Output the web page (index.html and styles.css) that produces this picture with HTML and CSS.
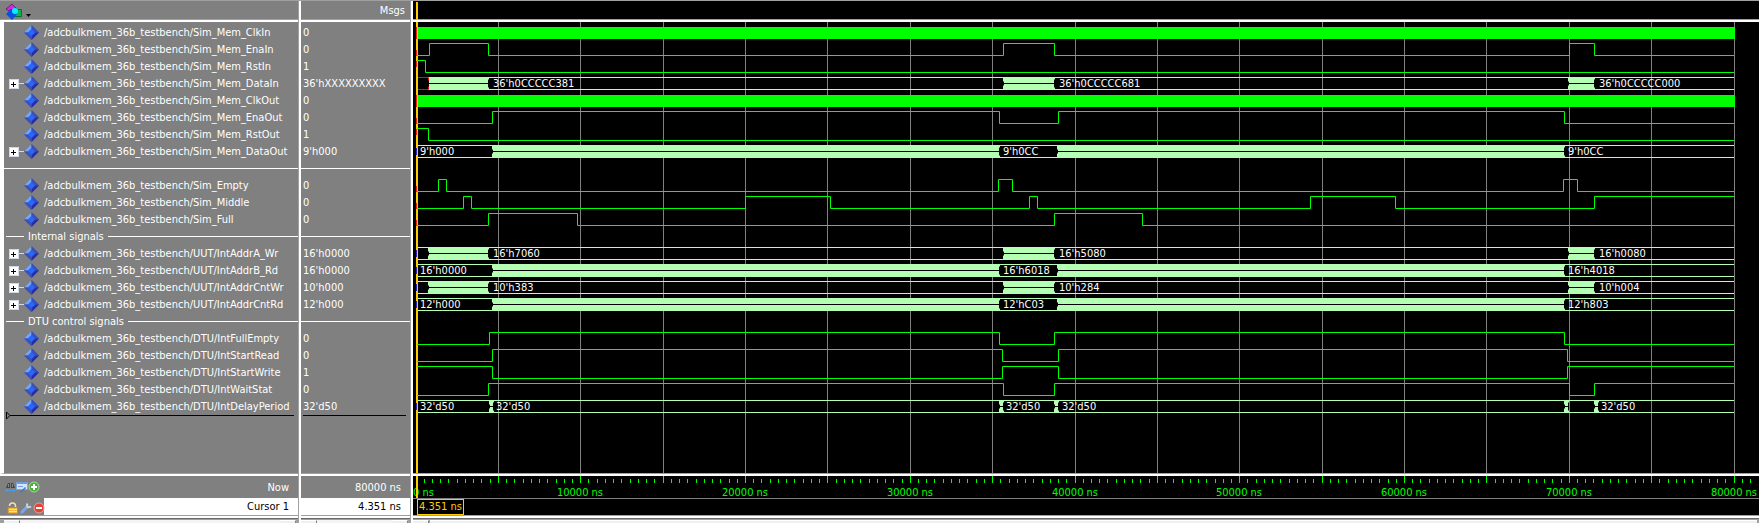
FILE: index.html
```html
<!DOCTYPE html>
<html lang="en">
<head>
<meta charset="utf-8">
<title>Wave</title>
<link rel="stylesheet" href="styles.css">
</head>
<body>
<svg class="defs" aria-hidden="true">
  <symbol id="signal" viewBox="0 0 15 15">
    <path fill="#3c5cc8" d="M7.5 0 15 7.5 7.5 15 0 7.5z"/>
    <path fill="#7ba6ee" d="M7.5 0v4L4 7.5H0z"/>
    <path fill="#3a50b4" d="M7.5 0v4L11 7.5h4z"/>
    <path fill="#2c2ca0" d="M15 7.5h-4L7.5 11v4z"/>
    <path fill="#3e50b8" d="M0 7.5h4L7.5 11v4z"/>
    <path fill="#2468ff" d="M7.5 4 11 7.5 7.5 11 4 7.5z"/>
  </symbol>
</svg>
<main class="wave-window">
  <section class="pane names" aria-label="Signals">
    <header class="bar head">
      <button class="tool" type="button" aria-label="Object type">
        <svg width="26" height="18" viewBox="0 0 26 18">
          <path fill="#d028e0" stroke="#500060" stroke-width=".6" d="M0 7 6 2l5 5-3 3-3-3-2 2z"/>
          <path fill="#10b050" stroke="#087030" d="M8.500 7.500h7v7h-7z"/>
          <path fill="#0a50e0" d="M5 7l6 5-5 6-6-6z"/>
          <circle cx="9" cy="9" r="3" fill="#00f0ff"/>
          <path fill="#000" d="M20 12h5l-2.500 3z"/>
        </svg>
      </button>
    </header>
    <ul class="rows gutter" id="names"></ul>
    <footer class="foot">
      <div class="foot-row now">
        <button class="tool" type="button" aria-label="Find edges"><svg width="11" height="12" viewBox="0 0 11 12"><path fill="#444" d="M1 7 3 2h2v5zM6 7V2h2l2 5z"/><path fill="#8a8a8a" d="M3 3h1v3H3zM7 3h1v3H7z"/><path stroke="#4d9be8" fill="none" d="M0 9.500h10M2 8v3M9 8v3"/></svg></button>
        <button class="tool" type="button" aria-label="Edit grid"><svg width="12" height="12" viewBox="0 0 12 12"><path fill="#d6e6fa" stroke="#7fa6dc" d="M.5 1.500h11v7H.5z"/><path fill="#6f9be0" d="M1 1h10v2H1zM2 5h5v1H2z"/><path fill="#3b78d0" d="m4 11 5-5 1 1-5 5z"/></svg></button>
        <button class="tool" type="button" aria-label="Add cursor"><svg width="12" height="12" viewBox="0 0 12 12"><circle cx="6" cy="6" r="5" fill="#4caf3c" stroke="#a4dc98"/><path stroke="#fff" stroke-width="2" d="M6 3v6M3 6h6"/></svg></button>
        <span class="foot-label">Now</span>
      </div>
      <div class="foot-row cursor">
        <span class="foot-tools">
          <button class="tool" type="button" aria-label="Lock cursor"><svg width="12" height="12" viewBox="0 0 12 12"><path fill="none" stroke="#f3dfa6" stroke-width="1.500" d="M2.500 4c0-4 6-4 6 0v2"/><path fill="#f4b73c" stroke="#c98a1c" d="M1 5.500h9.500v6H1z"/><path stroke="#fbe2a0" d="M2 7.500h8M2 9.500h8"/></svg></button>
          <button class="tool" type="button" aria-label="Edit cursor"><svg width="12" height="12" viewBox="0 0 12 12"><path stroke="#7aa7ee" stroke-width="3" stroke-linecap="round" d="m2 10 5-5"/><path fill="none" stroke="#c9d3e0" stroke-width="2" d="M7.500 1.500C6 5 8 6 11 4.500"/></svg></button>
          <button class="tool" type="button" aria-label="Delete cursor"><svg width="12" height="12" viewBox="0 0 12 12"><circle cx="6" cy="6" r="5" fill="#e04434" stroke="#f0a098"/><path stroke="#fff" stroke-width="2" d="M3 6h6"/></svg></button>
        </span>
        <span class="foot-label">Cursor 1</span>
      </div>
    </footer>
    <div class="scroll"><i class="cap"></i><i class="track"></i><i class="cap"></i></div>
  </section>
  <section class="pane values" aria-label="Values">
    <header class="bar head"><span class="msgs">Msgs</span></header>
    <ul class="rows" id="values"></ul>
    <footer class="foot">
      <div class="foot-row now"><span class="foot-label">80000 ns</span></div>
      <div class="foot-row cursor"><span class="foot-label">4.351 ns</span></div>
    </footer>
    <div class="scroll"><i class="cap"></i><i class="track"></i><i class="cap"></i></div>
  </section>
  <section class="pane waves" aria-label="Waveforms">
    <header class="bar head"><i class="cursor-line"></i></header>
    <div class="plot"><svg id="plot" role="img" aria-label="Signal waveforms"></svg></div>
    <footer class="foot">
      <div class="foot-row scale"><svg id="scale" role="img" aria-label="Time scale"></svg></div>
      <div class="foot-row marker"><span class="stamp">4.351 ns</span></div>
    </footer>
    <div class="scroll"><i class="cap"></i><i class="thumb"></i></div>
  </section>
</main>
<script src="wave.js"></script>
</body>
</html>
```
FILE: styles.css
```css
* { box-sizing: border-box; }

body {
  margin: 0;
  background: #808080;
  color: #fff;
  font: 11px/17px "DejaVu Sans Condensed", "DejaVu Sans", sans-serif;
  overflow: hidden;
}

ul { list-style: none; margin: 0; padding: 0; }
svg { display: block; }
.defs { position: absolute; width: 0; height: 0; }

.wave-window {
  display: grid;
  grid-template-columns: 301px 112px minmax(0, 1fr);
  height: 100vh;
  border-top: 1px solid #a0a0a0;
}

.pane {
  display: flex;
  flex-direction: column;
  min-width: 0;
  min-height: 0;
}

.names, .values {
  padding-right: 1px;
  border-right: 2px solid #fff;
  box-shadow: inset -1px 0 #a0a0a0;
}

.bar {
  display: flex;
  align-items: center;
  height: 21px;
  flex: none;
  border-bottom: 2px solid #fff;
  box-shadow: inset 0 -1px #a0a0a0;
}

.names .bar { padding-left: 6px; }
.values .bar { justify-content: flex-end; padding-right: 5px; }

.tool {
  display: block;
  flex: none;
  margin: 0;
  padding: 0;
  border: 0;
  background: none;
}

.rows, .plot {
  flex: 1;
  min-height: 0;
  overflow: hidden;
  border-bottom: 1px solid #a0a0a0;
}

.rows { padding-top: 2px; }
.gutter { border-left: 4px solid #fff; }

.row {
  display: flex;
  align-items: center;
  height: 17px;
  white-space: nowrap;
}

.names .row { padding-left: 5px; }
.values .row { padding-left: 2px; }

.expander { display: flex; align-items: center; width: 15px; height: 17px; }
.plus { flex: none; padding: 0; border: 0; background: none; }
.stub { flex: 1; height: 1px; background: #d8d8d8; }
.glyph { width: 15px; height: 15px; margin-right: 5px; }

.divider { gap: 4px; }
.names .divider { padding-left: 2px; }
.values .divider, .names .divider.plain { padding-left: 0; }
.divider::after { content: ""; flex: 1; height: 1px; background: #fff; }
.divider.titled::before { content: ""; width: 18px; height: 1px; background: #fff; }

.insert {
  display: flex;
  align-items: center;
  height: 1px;
  margin: 0 4px 0 2px;
  background: #000;
}

.insert svg { overflow: visible; }

.foot {
  flex: none;
  border-top: 2px solid #fff;
  border-bottom: 2px solid #fff;
}

.foot-row { display: flex; align-items: center; }
.now { height: 22px; padding: 0 9px 0 5px; }
.cursor { height: 18px; padding-right: 9px; background: #fff; color: #000; border-bottom: 1px solid #a0a0a0; }
.foot-label { margin-left: auto; }
.foot-tools { display: flex; gap: 1px; width: 44px; height: 17px; padding: 3px 0 0 7px; background: #808080; }

.scroll {
  display: flex;
  flex: none;
  height: 5px;
  padding: 1px 2px 0 4px;
  border-top: 1px solid #696969;
  background: #a0a0a0;
}

.values .scroll, .waves .scroll { padding-left: 0; }
.cap { width: 16px; background: #f0f0f0; border-top: 1px solid #fff; border-right: 1px solid #808080; }
.track { flex: 1; background: #f4f4f4; }
.thumb { flex: 1; margin-left: 1px; background: #f0f0f0; border-top: 1px solid #fff; }

.waves { background: #000; }
.waves .bar { padding-left: 3px; }
.cursor-line { width: 2px; height: 18px; background: #ffcc00; }
.plot { padding-left: 3px; }
.plot svg, .scale svg { width: 100%; height: 100%; }
.scale { height: 23px; padding-left: 3px; border-bottom: 1px solid #808080; }
.scale svg { overflow: visible; }

.marker { height: 17px; padding-left: 4px; border-bottom: 1px solid #a0a0a0; }
.stamp { height: 16px; padding: 0 1px; line-height: 14px; border: 1px solid #ffcc00; color: #ffcc00; }

.plot text { fill: #fff; }
.scale text { fill: #0f0; text-anchor: middle; }
.scale .origin { text-anchor: start; }
.grid { stroke: #808080; }
.level, .ticks { stroke: #0f0; fill: none; }
.rail { stroke: #b4ffb4; fill: none; }
.busy { fill: #b4ffb4; }
.clock { fill: #0f0; }
.mid { stroke: #000; }
.unknown { stroke: #f00; fill: none; }
.caret { fill: #ffcc00; }
.red { fill: #ff2000; }
.blue { fill: #3020c0; }
```
FILE: wave.js
```js
const T = "/adcbulkmem_36b_testbench/";
const END = 1318;
const busA = [[13, 72], [588, 638], [1153, 1178]];
const busB = [[77, 583], [642, 1148]];

// level: [initial value, toggle positions]; bus: busy spans and labels
const rows = [
  { name: "Sim_Mem_ClkIn", value: "0", clock: true },
  { name: "Sim_Mem_EnaIn", value: "0", level: [0, 13, 72, 587, 638, 1153, 1178] },
  { name: "Sim_Mem_RstIn", value: "1", level: [1, 9] },
  { name: "Sim_Mem_DataIn", value: "36'hXXXXXXXXX", bus: busA, unknown: 12, text: [[77, "36'h0CCCCC381"], [643, "36'h0CCCCC681"], [1183, "36'h0CCCCC000"]] },
  { name: "Sim_Mem_ClkOut", value: "0", clock: true },
  { name: "Sim_Mem_EnaOut", value: "0", level: [0, 76, 583, 642, 1148] },
  { name: "Sim_Mem_RstOut", value: "1", level: [1, 12] },
  { name: "Sim_Mem_DataOut", value: "9'h000", bus: busB, text: [[4, "9'h000"], [587, "9'h0CC"], [1152, "9'h0CC"]] },
  { divider: "" },
  { name: "Sim_Empty", value: "0", level: [0, 22, 30, 582, 596, 1147, 1161] },
  { name: "Sim_Middle", value: "0", level: [0, 47, 55, 329, 414, 613, 621, 894, 979, 1178] },
  { name: "Sim_Full", value: "0", level: [0, 72, 161, 638, 726] },
  { divider: "Internal signals" },
  { name: "UUT/IntAddrA_Wr", value: "16'h0000", bus: busA, text: [[77, "16'h7060"], [643, "16'h5080"], [1183, "16'h0080"]] },
  { name: "UUT/IntAddrB_Rd", value: "16'h0000", bus: busB, text: [[4, "16'h0000"], [587, "16'h6018"], [1152, "16'h4018"]] },
  { name: "UUT/IntAddrCntWr", value: "10'h000", bus: busA, text: [[77, "10'h383"], [643, "10'h284"], [1183, "10'h004"]] },
  { name: "UUT/IntAddrCntRd", value: "12'h000", bus: busB, text: [[4, "12'h000"], [587, "12'hC03"], [1152, "12'h803"]] },
  { divider: "DTU control signals" },
  { name: "DTU/IntFullEmpty", value: "0", late: true, level: [0, 73, 583, 638, 1148] },
  { name: "DTU/IntStartRead", value: "0", late: true, level: [0, 76, 586, 642, 1151] },
  { name: "DTU/IntStartWrite", value: "1", late: true, level: [1, 76, 586, 642, 1151] },
  { name: "DTU/IntWaitStat", value: "0", late: true, level: [0, 72, 587, 638, 1153, 1178] },
  { name: "DTU/IntDelayPeriod", value: "32'd50", leaf: true, bus: [[74, 77], [584, 587], [639, 642], [1149, 1152], [1179, 1182]], text: [[4, "32'd50"], [80, "32'd50"], [590, "32'd50"], [646, "32'd50"], [1185, "32'd50"]] }
];

let names = "", values = "", plot = "";

rows.forEach(r => {
  if (r.divider !== undefined) {
    const kind = r.divider ? "titled" : "plain";
    names += `<li class="row divider ${kind}">${r.divider}</li>`;
    values += `<li class="row divider"></li>`;
    return;
  }
  const plus = r.bus && !r.leaf
    ? `<button class="plus" type="button" aria-label="Expand ${r.name}"><svg width="10" height="10"><path fill="#fff" d="M0 0h10v10H0z"/><path fill="none" stroke="#d0d6e6" d="M.5 .5h9v9h-9z"/><path stroke="#000" d="M2 5.500h5M4.500 3v5"/></svg></button><i class="stub"></i>` : "";
  names += `<li class="row"><span class="expander">${plus}</span><svg class="glyph"><use href="#signal"/></svg>${T}${r.name}</li>`;
  values += `<li class="row">${r.value}</li>`;
});
names += `<li class="insert"><svg width="4" height="7"><path fill="#808080" stroke="#000" d="M.5 0v7L4 3.500z"/></svg></li>`;
values += `<li class="insert"></li>`;
document.getElementById("names").innerHTML = names;
document.getElementById("values").innerHTML = values;

let grid = "";
for (let n = 1; n <= 16; n++) grid += `M${Math.floor(n * 82.375) + 0.5} 0V451`;
plot += `<path class="grid" d="${grid}"/><rect class="caret" width="2" height="451"/>`;

rows.forEach((r, i) => {
  const top = 2 + i * 17, hi = top + 2.5, lo = top + 14.5;
  if (r.clock) {
    plot += `<rect class="clock" x="2" y="${top + 3}" width="${END - 1}" height="12"/><rect class="red" y="${top + 3}" width="1" height="12"/>`;
  } else if (r.level) {
    let [v, ...edges] = r.level;
    const y = () => (v ? hi : lo);
    if (!r.late) plot += `<rect class="red" y="${top + (v ? 3 : 9)}" width="1" height="6"/>`;
    let d = `M1 ${y()}`;
    for (const x of edges) { d += `H${x + 0.5}`; v = 1 - v; d += `V${y()}`; }
    plot += `<path class="level" d="${d}H${END}"/>`;
  } else if (r.bus) {
    plot += `<path class="rail" d="M2 ${hi}H${END}M2 ${lo}H${END}"/>`;
    if (r.unknown) plot += `<path class="unknown" d="M2 ${hi}H${r.unknown + 0.5}v3M2 ${lo}H${r.unknown + 0.5}v-3"/>`;
    else plot += `<rect class="blue" y="${top + 5}" width="1" height="7"/>`;
    for (const [a, b] of r.bus) {
      plot += `<rect class="busy" x="${a}" y="${top + 2}" width="${b - a}" height="13"/>`;
      plot += `<path class="mid" d="M${a} ${top + 8.5}H${b}"/>`;
      if (!(r.unknown && a < 20)) plot += `<path class="rail" d="M${a - 0.5} ${hi}v4M${a - 0.5} ${lo}v-4"/>`;
      plot += `<path class="rail" d="M${b + 0.5} ${hi}v2M${b + 0.5} ${lo}v-2"/>`;
    }
    for (const [x, s] of r.text) plot += `<text x="${x}" y="${top + 12}">${s}</text>`;
  }
});
document.getElementById("plot").innerHTML = plot;

let ticks = "";
for (let n = 1; n <= 162; n++) {
  const x = Math.floor(n * 8.2375) + 0.5;
  ticks += n % 10 ? `M${x} 3v4` : `M${x} 0v7`;
}
let labels = `<text class="origin" x="-3" y="20">0 ns</text>`;
for (let n = 1; n <= 8; n++) labels += `<text x="${Math.floor(n * 164.75)}" y="20">${n * 10000} ns</text>`;
document.getElementById("scale").innerHTML =
  `<path class="ticks" d="${ticks}"/>${labels}<rect class="caret" width="2" height="22"/>`;
```
